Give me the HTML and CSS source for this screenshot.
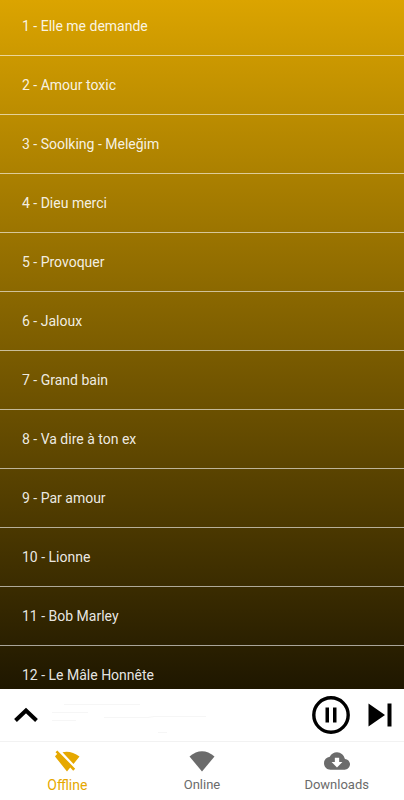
FILE: index.html
```html
<!DOCTYPE html>
<html lang="fr">
<head>
	<meta charset="utf-8">
	<meta name="viewport" content="width=device-width, initial-scale=1">
	<title>Offline</title>
	<link rel="stylesheet" href="styles.css">
</head>
<body>
<main id="songs">
	<ul class="list">
		<li><button class="song">1 - Elle me demande</button></li>
		<li><button class="song">2 - Amour toxic</button></li>
		<li><button class="song">3 - Soolking - Meleğim</button></li>
		<li><button class="song">4 - Dieu merci</button></li>
		<li><button class="song">5 - Provoquer</button></li>
		<li><button class="song">6 - Jaloux</button></li>
		<li><button class="song">7 - Grand bain</button></li>
		<li><button class="song">8 - Va dire à ton ex</button></li>
		<li><button class="song">9 - Par amour</button></li>
		<li><button class="song">10 - Lionne</button></li>
		<li><button class="song">11 - Bob Marley</button></li>
		<li><button class="song">12 - Le Mâle Honnête</button></li>
	</ul>
</main>
<div id="player">
	<button class="expand" aria-label="Expand">
		<svg width="24" height="16" viewBox="0 0 24 16"><path d="M1.5 13.5L12 3.5l10.500 10" fill="none" stroke="#000" stroke-width="4"/></svg>
	</button>
	<svg class="track" width="160" height="40" viewBox="0 0 160 40" preserveAspectRatio="xMinYMid" fill="none" stroke="#f6f6f6" aria-hidden="true">
		<path d="M14 9.500h76M2 17.500h36M2 25.500h24M54 22.500h44l6-1h52M108 37.500h9"/>
	</svg>
	<button aria-label="Pause">
		<svg width="38" height="38" viewBox="0 0 38 38"><circle cx="19" cy="19" r="17.200" fill="none" stroke="#000" stroke-width="3.400"/><path d="M13.500 11.500h3.500v15h-3.500zM21 11.500h3.500v15H21z"/></svg>
	</button>
	<button class="next" aria-label="Next">
		<svg width="24" height="24" viewBox="0 0 24 24"><path d="M.500.500L17 12 .500 23.500zM19.500.500h4v23h-4z"/></svg>
	</button>
</div>
<nav id="tabs">
	<a href="#offline" class="tab selected">
		<svg width="26" height="22" viewBox="0 0 26 22"><path d="M3.300.500L1.500 2.300l1.800 1.800Q2 5 1 6.500L13 21.500l3.200-4 3 3.200 2-2zM8.500 2.200Q17 .200 25.500 6.500L19.500 14z"/></svg>
		<span>Offline</span>
	</a>
	<a href="#online" class="tab">
		<svg width="26" height="22" viewBox="0 0 26 22"><path d="M.500 6.500Q13-4 25.500 6.500L13 21.500z"/></svg>
		<span>Online</span>
	</a>
	<a href="#downloads" class="tab">
		<svg width="26" height="22" viewBox="0 0 24 20"><path d="M19.350 8.040A7.490 7.490 0 0 0 12 2C9.110 2 6.600 3.640 5.350 6.040A5.994 5.994 0 0 0 0 12c0 3.310 2.690 6 6 6h13c2.760 0 5-2.240 5-5 0-2.640-2.050-4.780-4.650-4.960zM17 11l-5 5-5-5h3V7h4v4h3z"/></svg>
		<span>Downloads</span>
	</a>
</nav>
</body>
</html>
```
FILE: styles.css
```css
body{
	margin: 0;
	height: 100vh;
	display: flex;
	flex-direction: column;
	overflow: hidden;
	background: linear-gradient(#dba400, #000);
	font-family: Roboto, "Liberation Sans", sans-serif;
}
button{
	border: none;
	background: none;
	padding: 0;
	font: inherit;
	color: inherit;
}
svg{
	display: block;
}
#songs{
	flex: 1;
	min-height: 0;
	overflow: hidden;
}
/* the list is scrolled down by a few pixels */
.list{
	list-style: none;
	margin: -3px 0 0;
	padding: 0;
}
.song{
	display: block;
	box-sizing: border-box;
	width: 100%;
	height: 59px;
	padding: 0 22px;
	border-bottom: 1px solid rgba(255,255,255,0.6);
	color: rgba(255,255,255,0.9);
	font-size: 14px;
	text-align: left;
}
#player{
	display: flex;
	align-items: center;
	height: 52px;
	padding: 0 12px 0 14px;
	background: white;
	border-bottom: 1px solid #f2f2f2;
}
.track{
	flex: 1;
	min-width: 0;
	margin: 0 12px;
}
.next{
	margin-left: 18px;
}
#tabs{
	display: flex;
	height: 58px;
	background: white;
}
.tab{
	flex: 1;
	display: flex;
	flex-direction: column;
	align-items: center;
	justify-content: center;
	gap: 4px;
	padding-top: 2px;
	color: #6b6b6b;
	fill: #6b6b6b;
	font-size: 13px;
	line-height: 18px;
	text-decoration: none;
}
.selected{
	color: #e6a800;
	fill: #e6a800;
	font-size: 14px;
}
```
